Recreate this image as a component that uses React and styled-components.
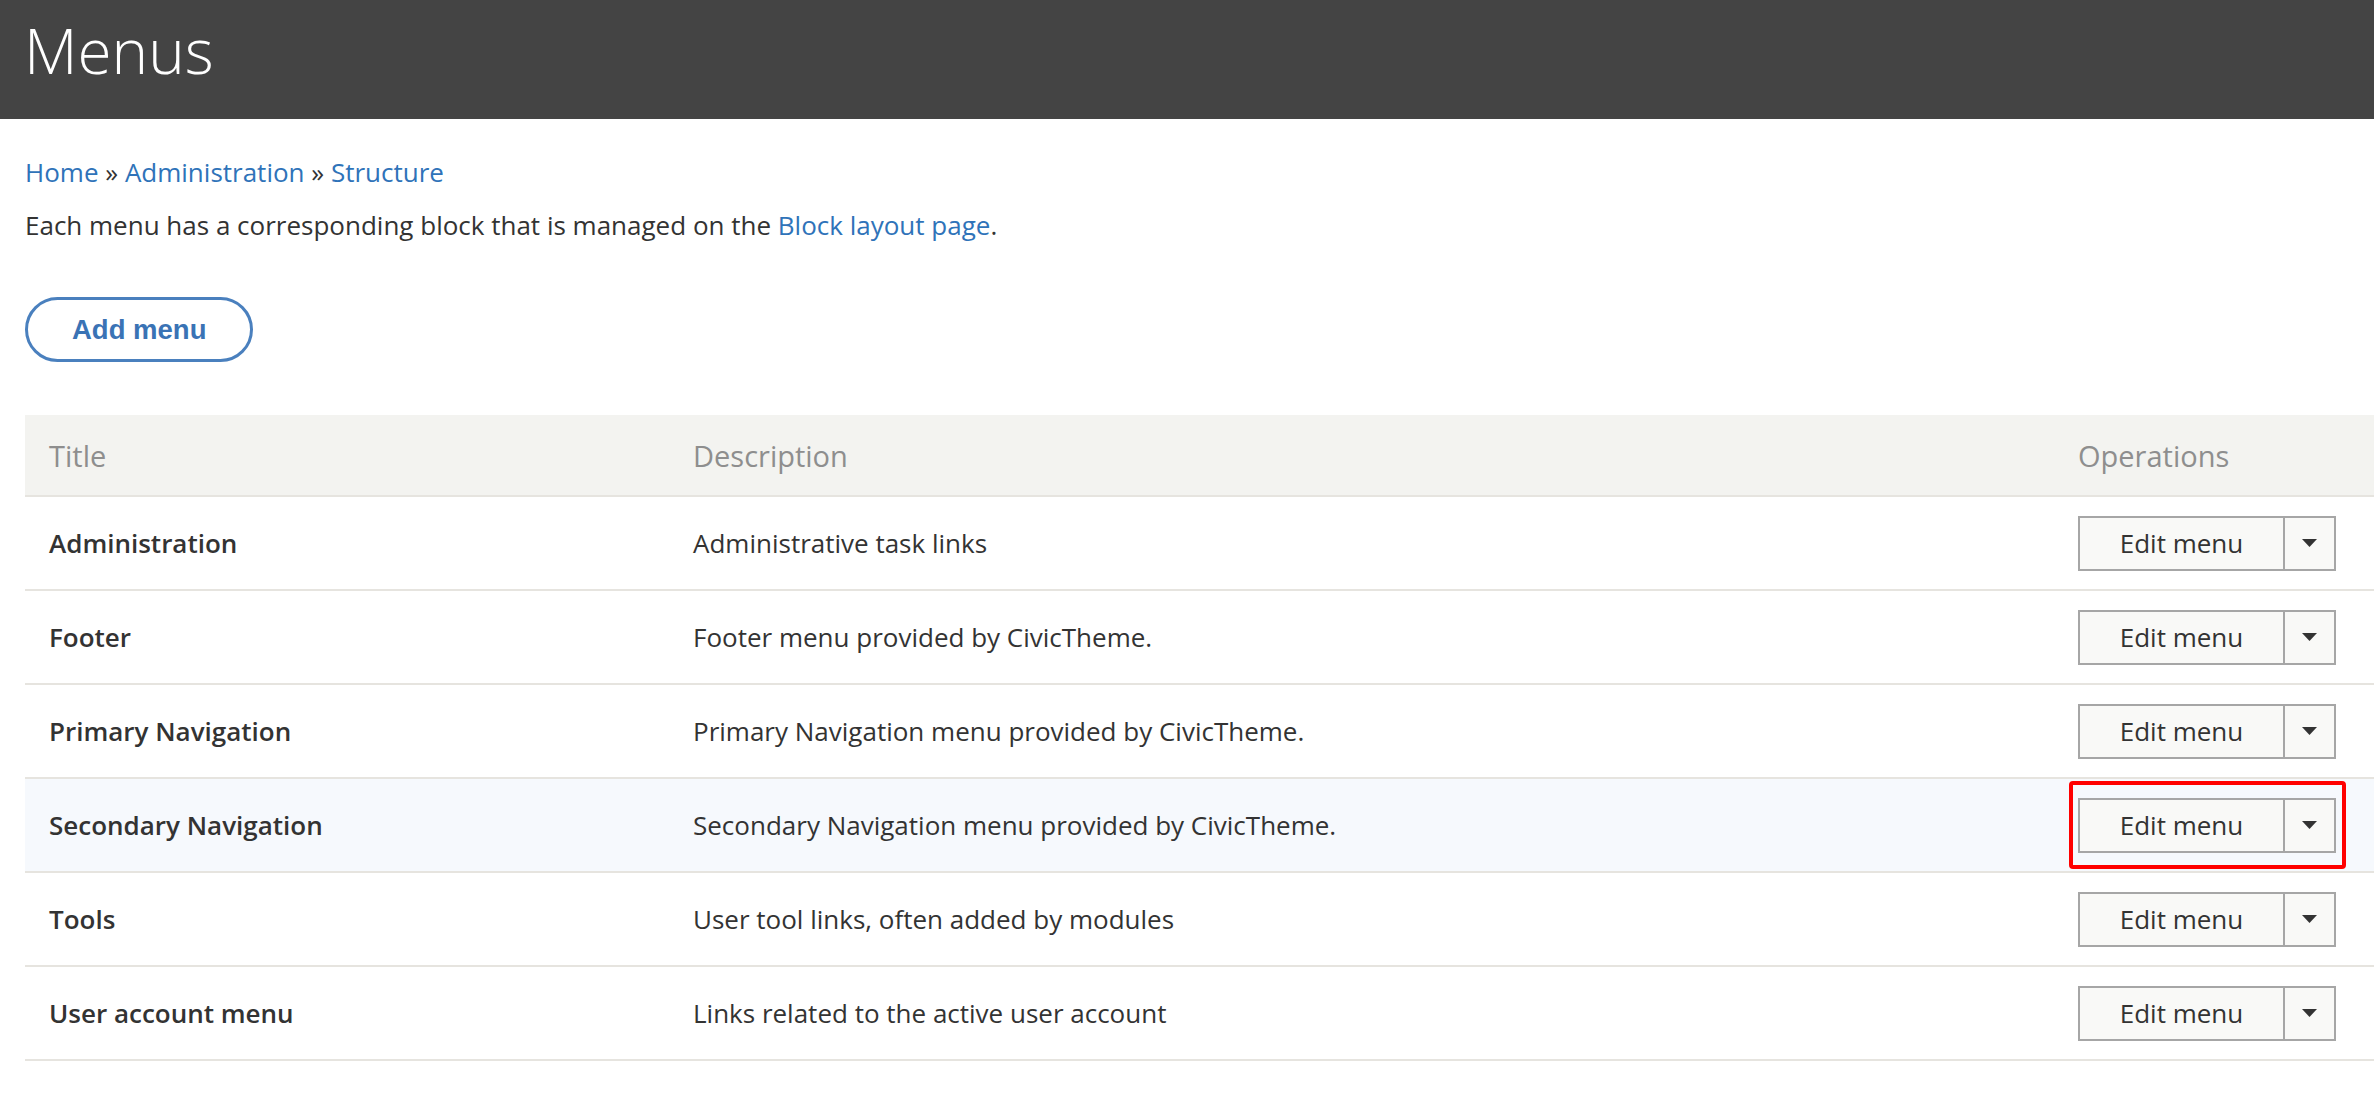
import styled, { createGlobalStyle } from 'styled-components';

const GlobalStyle = createGlobalStyle`
  body {
    margin: 0;
    background: #fff;
    color: #333;
    font-family: "Open Sans", "Liberation Sans", sans-serif;
  }
`;

const MENUS = [
  { title: 'Administration', description: 'Administrative task links' },
  { title: 'Footer', description: 'Footer menu provided by CivicTheme.' },
  { title: 'Primary Navigation', description: 'Primary Navigation menu provided by CivicTheme.' },
  { title: 'Secondary Navigation', description: 'Secondary Navigation menu provided by CivicTheme.', marked: true },
  { title: 'Tools', description: 'User tool links, often added by modules' },
  { title: 'User account menu', description: 'Links related to the active user account' },
];

const PageHeader = styled.header`
  box-sizing: border-box;
  height: 119px;
  padding: 19px 0 0 24px;
  background: #444;
`;

const PageTitle = styled.h1`
  margin: 0;
  font-size: 62px;
  line-height: 62px;
  font-weight: 300;
  color: #fff;
`;

const Content = styled.main`
  padding: 34px 0 0 25px;
`;

const Breadcrumb = styled.nav`
  font-size: 26px;
  line-height: 38px;
  color: #333;
`;

const Link = styled.a`
  color: #2f73b9;
  text-decoration: none;
`;

const Intro = styled.p`
  margin: 15px 0 0;
  font-size: 26px;
  line-height: 38px;
`;

const Actions = styled.div`
  display: flex;
  margin-top: 53px;
`;

const AddButton = styled.button`
  box-sizing: border-box;
  height: 65px;
  padding: 0 44px;
  border: 3px solid #4a80be;
  border-radius: 33px;
  background: #fff;
  color: #3a73b5;
  font-family: "Liberation Sans", Arial, sans-serif;
  font-weight: 700;
  font-size: 27.5px;
`;

const Table = styled.div`
  margin-top: 53px;
`;

const Row = styled.div`
  display: grid;
  grid-template-columns: 644px 1385px 1fr;
  align-items: center;
  min-height: ${({ $head }) => ($head ? '80px' : '92px')};
  border-bottom: 2px solid #e6e4df;
  background: ${({ $head, $tint }) => ($head ? '#f3f3f0' : $tint ? '#f6f9fd' : '#fff')};
`;

const HeadCell = styled.div`
  padding: 0 24px;
  font-size: 29px;
  line-height: 43px;
  color: #8e8e8e;
`;

const Cell = styled.div`
  padding: 0 24px;
  font-size: 26px;
  line-height: 38px;
  font-weight: ${({ $strong }) => ($strong ? 600 : 400)};
  color: #333;
`;

const DropWrap = styled.div`
  position: relative;
  display: inline-flex;
  vertical-align: middle;
`;

const DropButton = styled.div`
  display: flex;
  box-sizing: border-box;
  height: 55px;
  border: 2px solid #a6a6a6;
  background: #f9f9f7;
`;

const MainAction = styled.span`
  display: flex;
  align-items: center;
  justify-content: center;
  width: 203px;
  border-right: 2px solid #a6a6a6;
  font-size: 26px;
  color: #333;
`;

const Toggle = styled.span`
  display: flex;
  align-items: center;
  justify-content: center;
  width: 49px;
`;

const Marker = styled.span`
  position: absolute;
  top: -17px;
  bottom: -16px;
  left: -9px;
  right: -10px;
  border: 4px solid #f00;
  border-radius: 4px;
  pointer-events: none;
`;

const Caret = () => (
  <svg width="15" height="8" viewBox="0 0 15 8">
    <polygon points="0,0 15,0 7.5,8" fill="#333" />
  </svg>
);

const EditMenu = ({ marked }) => (
  <DropWrap>
    <DropButton>
      <MainAction>Edit menu</MainAction>
      <Toggle>
        <Caret />
      </Toggle>
    </DropButton>
    {marked && <Marker />}
  </DropWrap>
);

export default function App() {
  return (
    <>
      <GlobalStyle />
      <PageHeader>
        <PageTitle>Menus</PageTitle>
      </PageHeader>
      <Content>
        <Breadcrumb>
          <Link href="#">Home</Link> » <Link href="#">Administration</Link> »{' '}
          <Link href="#">Structure</Link>
        </Breadcrumb>
        <Intro>
          Each menu has a corresponding block that is managed on the{' '}
          <Link href="#">Block layout page</Link>.
        </Intro>
        <Actions>
          <AddButton>Add menu</AddButton>
        </Actions>
        <Table>
          <Row $head>
            <HeadCell>Title</HeadCell>
            <HeadCell>Description</HeadCell>
            <HeadCell>Operations</HeadCell>
          </Row>
          {MENUS.map(({ title, description, marked }) => (
            <Row key={title} $tint={marked}>
              <Cell $strong>{title}</Cell>
              <Cell>{description}</Cell>
              <Cell>
                <EditMenu marked={marked} />
              </Cell>
            </Row>
          ))}
        </Table>
      </Content>
    </>
  );
}
